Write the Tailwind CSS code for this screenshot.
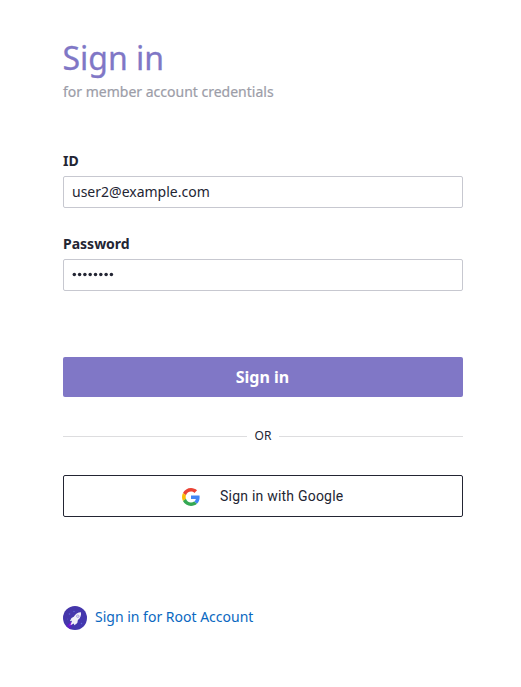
<!DOCTYPE html>
<html lang="en">
<head>
<meta charset="utf-8">
<title>Sign in</title>
<script src="https://cdn.jsdelivr.net/npm/@tailwindcss/browser@4"></script>
</head>
<body class="bg-white font-['Noto_Sans',sans-serif] text-[#232533]">
<main class="ml-[63px] flex w-[400px] flex-col pt-9">
  <h1 class="-ml-[0.5px] h-[46px] text-[32px] leading-[44px] text-[#8077c6] [-webkit-text-stroke:0.3px_#8077c6]">Sign in</h1>
  <p class="text-sm leading-5 text-[#9c9da8] [-webkit-text-stroke:0.2px_#9c9da8]">for member account credentials</p>

  <form class="mt-[49px] flex flex-col">
    <label for="uid" class="text-sm leading-5 font-bold">ID</label>
    <input id="uid" type="text" value="user2@example.com" class="mt-[5px] h-8 rounded-xs border border-[#c7c8d0] px-2 pb-0.5 text-sm outline-none">
    <label for="pw" class="mt-[26px] text-sm leading-5 font-bold">Password</label>
    <div id="pw" class="mt-[5px] flex h-8 items-center rounded-xs border border-[#c7c8d0] px-2">
      <svg class="h-4 w-11" viewBox="0 0 44 16" fill="#232533">
        <circle cx="2.300" cy="7.500" r="1.750"/><circle cx="7.600" cy="7.500" r="1.750"/><circle cx="12.900" cy="7.500" r="1.750"/><circle cx="18.200" cy="7.500" r="1.750"/><circle cx="23.500" cy="7.500" r="1.750"/><circle cx="28.800" cy="7.500" r="1.750"/><circle cx="34.100" cy="7.500" r="1.750"/><circle cx="39.400" cy="7.500" r="1.750"/>
      </svg>
    </div>
    <button type="button" class="mt-[66px] h-10 rounded-xs bg-[#8077c6] pr-px text-base font-bold text-white">Sign in</button>
  </form>

  <div class="mt-[30px] flex h-[18px] items-center gap-2 text-xs">
    <span class="h-px flex-1 bg-[#dddddf]"></span><span>OR</span><span class="h-px flex-1 bg-[#dddddf]"></span>
  </div>

  <button type="button" class="mt-[30px] flex h-[42px] items-center rounded-xs border border-[#232533] pl-[118px] font-['Roboto',sans-serif] text-sm tracking-[0.22px]">
    <svg class="mt-0.5 size-[18px]" viewBox="0 0 48 48">
      <path fill="#EA4335" d="M24 9.5c3.54 0 6.71 1.22 9.21 3.6l6.85-6.85C35.9 2.38 30.47 0 24 0 14.62 0 6.51 5.38 2.56 13.22l7.98 6.19C12.43 13.72 17.74 9.5 24 9.5z"/>
      <path fill="#4285F4" d="M46.98 24.55c0-1.57-.15-3.09-.38-4.55H24v9.02h12.94c-.58 2.96-2.26 5.48-4.78 7.18l7.73 6c4.51-4.18 7.09-10.36 7.09-17.65z"/>
      <path fill="#FBBC05" d="M10.53 28.59A14.5 14.5 0 0 1 9.77 24c0-1.6.27-3.14.76-4.59l-7.98-6.19A24 24 0 0 0 0 24c0 3.88.92 7.54 2.56 10.78z"/>
      <path fill="#34A853" d="M24 48c6.48 0 11.93-2.13 15.89-5.81l-7.73-6c-2.15 1.45-4.92 2.3-8.16 2.3-6.26 0-11.57-4.22-13.47-9.91l-7.98 6.19C6.51 42.62 14.62 48 24 48z"/>
    </svg>
    <span class="ml-5">Sign in with Google</span>
  </button>

  <a class="mt-[89px] flex h-6 items-center gap-2 text-sm text-[#0a68c1]">
    <svg class="size-6" viewBox="0 0 24 24">
      <defs>
        <clipPath id="disc"><circle cx="12" cy="12" r="12"/></clipPath>
        <linearGradient id="sky" x1="0" y1="0" x2="1" y2="1"><stop stop-color="#4535a8"/><stop offset="1" stop-color="#4338b0"/></linearGradient>
      </defs>
      <g clip-path="url(#disc)">
        <rect width="24" height="24" fill="url(#sky)"/>
        <path d="M2 22l4-5 3 2-2 5z" fill="#5c20c4"/>
        <path d="M5.500 20.500l2-4.500 2 2z" fill="#8a1be0"/>
        <g fill="#6068d8"><circle cx="6.500" cy="8" r=".8"/><circle cx="11" cy="5.500" r=".7"/><circle cx="18.500" cy="17.500" r=".7"/><circle cx="4.500" cy="13" r=".4"/></g>
        <path d="M18 6.200c-3.200.1-5.700 1.700-7.200 4.500l-2.300 1.200-1.700 3.300 2.200-.4-1.500 4.400 3.300-1.700.6 1.800 2.900-2.300.6-2.900c2.500-2.200 3.500-4.800 3.100-7.900z" fill="#f1f0f8"/>
        <circle cx="14.800" cy="10.200" r="1.300" fill="#dedaf6" stroke="#8b7fd6" stroke-width=".6"/>
      </g>
    </svg>
    <span class="-mt-0.5">Sign in for Root Account</span>
  </a>
</main>
</body>
</html>
